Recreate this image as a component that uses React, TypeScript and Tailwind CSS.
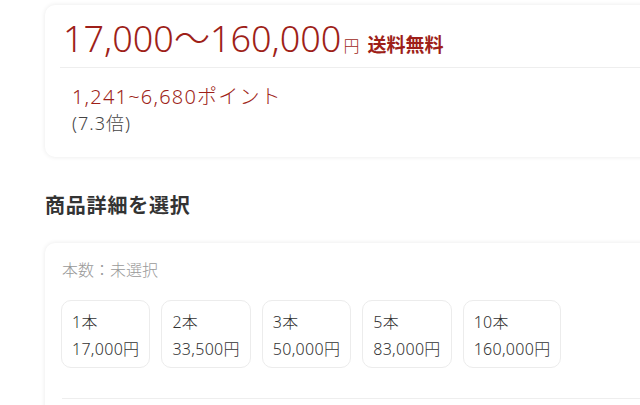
import React from "react";

const options = [
  { qty: "1本", price: "17,000円" },
  { qty: "2本", price: "33,500円" },
  { qty: "3本", price: "50,000円" },
  { qty: "5本", price: "83,000円" },
  { qty: "10本", price: "160,000円" },
];

export default function App() {
  return (
    <div
      className="h-[405px] w-[640px] overflow-hidden bg-white font-light"
      style={{ fontFamily: '"Noto Sans", "Noto Sans CJK JP", sans-serif' }}
    >
      <div className="pl-[45px] pt-[5px]">
        {/* price card */}
        <div className="w-[620px] rounded-[10px] bg-white shadow-[0_0_5px_rgba(0,0,0,0.09)]">
          <div className="flex items-baseline pl-[18px] pt-[14px] pb-[7px] text-[#9e1f19]">
            <span className="text-[36px] leading-[40px]">17,000〜160,000</span>
            <span className="ml-[2px] text-[16px]">円</span>
            <span className="ml-[8px] text-[19px] font-bold">送料無料</span>
          </div>
          <div className="ml-[15px] border-t border-[#eeeeee]" />
          <div className="pl-[27px] pt-[16px] pb-[21px]">
            <div className="text-[20px] leading-[26px] tracking-[1.2px] text-[#9e1f19]">1,241~6,680ポイント</div>
            <div className="text-[18px] leading-[26px] tracking-[1px] text-[#444444]">(7.3倍)</div>
          </div>
        </div>

        <h2 className="pt-[35px] text-[20px] font-bold leading-[28px] tracking-[0.8px] text-[#333333]">
          商品詳細を選択
        </h2>

        {/* option card */}
        <div className="mt-[23px] w-[620px] rounded-[10px] bg-white shadow-[0_0_5px_rgba(0,0,0,0.09)]">
          <div className="pl-[17px] pt-[15px] text-[16px] leading-[24px] text-[#999999]">本数：未選択</div>
          <div className="flex gap-[11px] pl-[16px] pt-[18px]">
            {options.map((o) => (
              <div
                key={o.qty}
                className="rounded-[10px] border border-[#ececec] pl-[10px] pr-[10px] pt-[8px] pb-[4px] text-[16px] leading-[27px] tracking-[0.3px] text-[#333333]"
              >
                <div>{o.qty}</div>
                <div>{o.price}</div>
              </div>
            ))}
          </div>
          <div className="ml-[17px] mt-[30px] border-t border-[#eeeeee]" />
          <div className="h-[20px]" />
        </div>
      </div>
    </div>
  );
}
